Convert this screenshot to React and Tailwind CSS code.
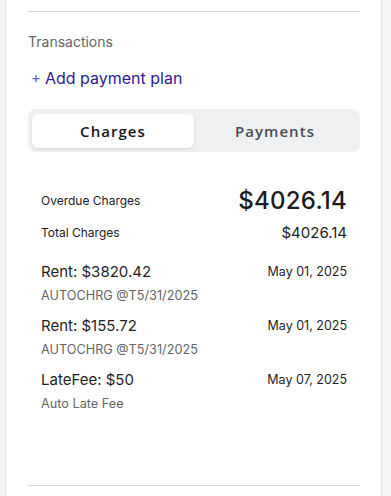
import { useState } from "react";

const charges = [
  { title: "Rent: $3820.42", note: "AUTOCHRG @T5/31/2025", date: "May 01, 2025" },
  { title: "Rent: $155.72", note: "AUTOCHRG @T5/31/2025", date: "May 01, 2025" },
  { title: "LateFee: $50", note: "Auto Late Fee", date: "May 07, 2025" },
];

const App = () => {
  const [tab, setTab] = useState("charges");

  const tabClass = (name) =>
    `rounded-[6px] text-[15px] font-semibold tracking-[0.07em] ${
      tab === name
        ? "bg-white shadow-[0_1px_3px_rgba(0,0,0,0.12)] text-[#161616]"
        : "text-[#474c54]"
    }`;

  return (
    <div
      className="w-[391px] h-[496px] bg-[#f4f4f4] pl-[5px] pr-[9px] overflow-hidden"
      style={{ fontFamily: "Inter, 'Liberation Sans', sans-serif" }}
    >
      <div className="h-full bg-white border-x border-[#e6e6e6] pl-[22px] pr-[21px] pt-[11px] flex flex-col">
        {/* Header */}
        <div className="border-t border-[#d6d6d6]" />
        <p className="mt-[20px] h-[20px] text-[14px] leading-[20px] text-[#666666]">Transactions</p>
        <button className="mt-[14px] h-[24px] self-start flex items-center gap-[4px] text-[16px] leading-[24px] text-[#2b1d8f]">
          <span className="text-[#6b5bd6] text-[15px] pl-[3px]">+</span>
          Add payment plan
        </button>

        {/* Tabs */}
        <div className="mt-[19px] h-[43px] shrink-0 bg-[#eff0f2] rounded-[8px] pt-[5px] pb-[4px] px-[4px] grid grid-cols-2">
          <button
            onClick={() => setTab("charges")}
            className={tabClass("charges")}
            style={{ fontFamily: "'Open Sans', 'Liberation Sans', sans-serif" }}
          >
            Charges
          </button>
          <button
            onClick={() => setTab("payments")}
            className={tabClass("payments")}
            style={{ fontFamily: "'Open Sans', 'Liberation Sans', sans-serif" }}
          >
            Payments
          </button>
        </div>

        {/* Summary */}
        <div className="pl-[13px] pr-[13px] mt-[35px] flex-1">
          <div className="flex items-center justify-between h-[28px]">
            <span className="text-[12px] text-[#222222]">Overdue Charges</span>
            <span className="text-[24px] font-medium text-[#1c1c1c] tracking-[0.01em]">$4026.14</span>
          </div>
          <div className="flex items-center justify-between mt-[8px] h-[20px]">
            <span className="text-[12px] text-[#222222]">Total Charges</span>
            <span className="text-[15px] text-[#222222]">$4026.14</span>
          </div>

          <div className="mt-[18px] flex flex-col gap-[6px]">
            {charges.map((c, i) => (
              <div key={i} className="flex justify-between">
                <div>
                  <p className="text-[15px] leading-[22px] text-[#1f1f1f]">{c.title}</p>
                  <p className="text-[12.7px] leading-[26px] text-[#666666]">{c.note}</p>
                </div>
                <p className="text-[12.5px] leading-[22px] text-[#1f1f1f]">{c.date}</p>
              </div>
            ))}
          </div>
        </div>

        <div className="border-t border-[#d6d6d6] mb-[10px]" />
      </div>
    </div>
  );
};

export default App;
